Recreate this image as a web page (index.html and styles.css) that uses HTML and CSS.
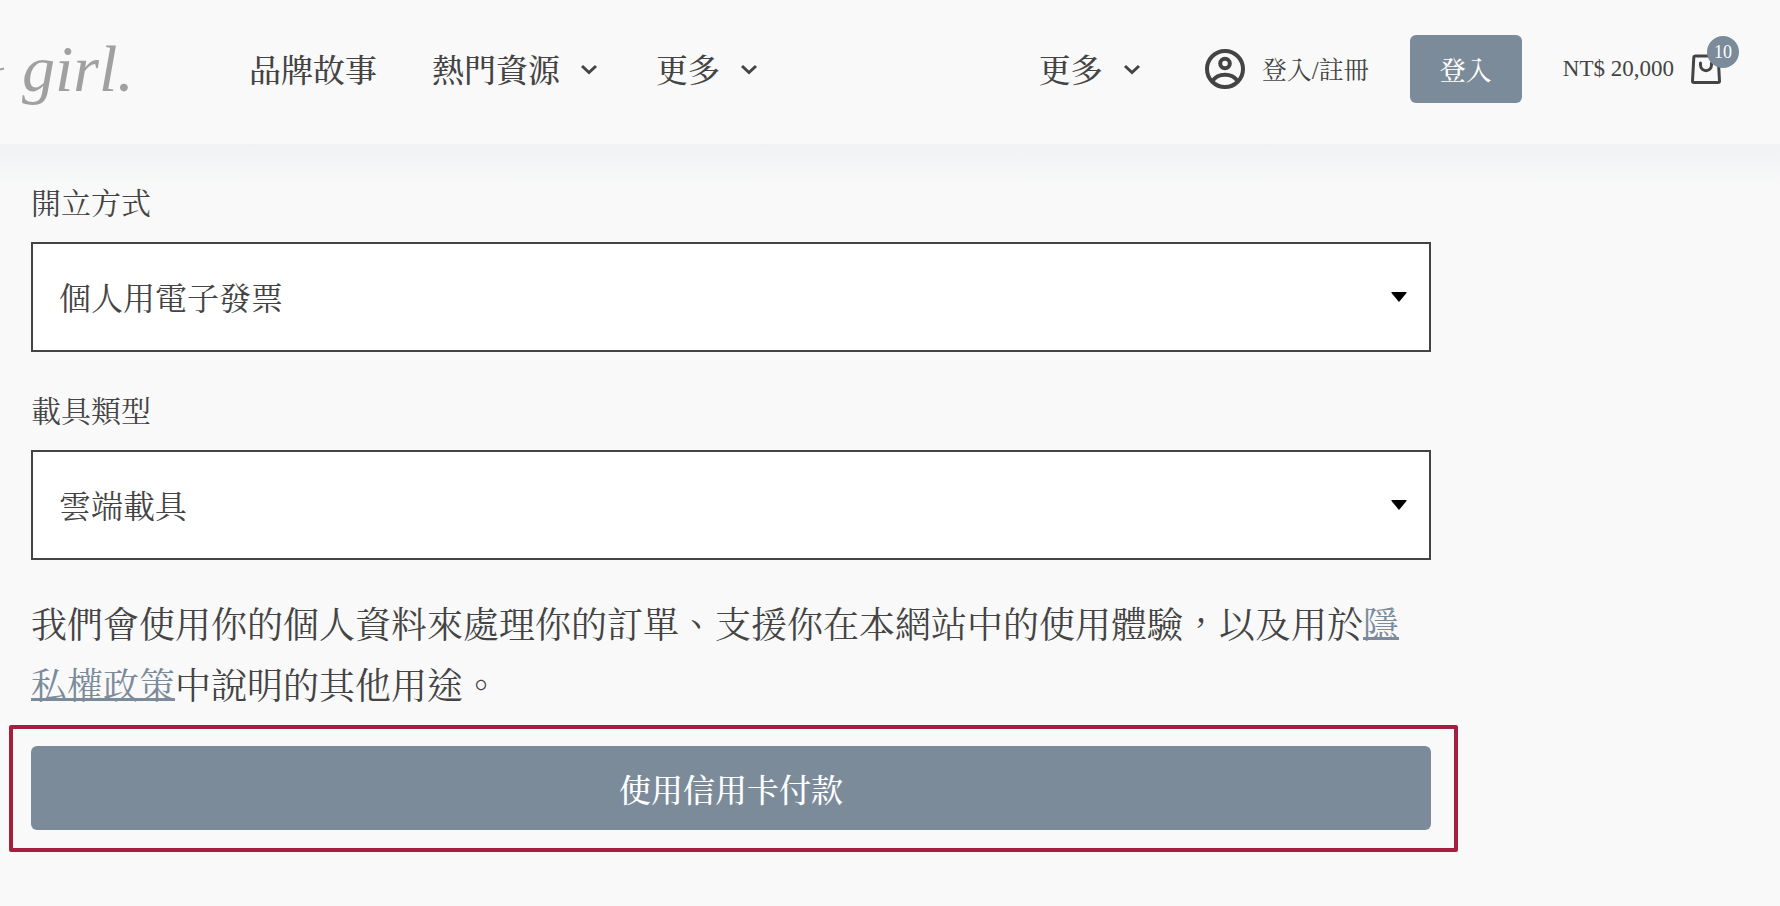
FILE: index.html
```html
<!DOCTYPE html>
<html lang="zh-Hant">
<head>
    <meta charset="utf-8">
    <meta name="viewport" content="width=device-width, initial-scale=1.0">
    <title>結帳</title>
    <link rel="stylesheet" href="styles.css">
</head>

<body>
    <header class="site-header">
        <a class="logo" href="#">
            <svg class="logo-tail" width="6" height="8" viewBox="0 0 6 8"><path d="M0 4.500 L4 3.500" /></svg>
            <span class="logo-text">girl.</span>
        </a>

        <nav class="menu">
            <a class="menu-item" href="#">品牌故事</a>
            <a class="menu-item" href="#">熱門資源
                <svg class="chevron" width="24" height="24" viewBox="0 0 24 24"><path d="M5 9 L12 15.500 L19 9" /></svg>
            </a>
            <a class="menu-item" href="#">更多
                <svg class="chevron" width="24" height="24" viewBox="0 0 24 24"><path d="M5 9 L12 15.500 L19 9" /></svg>
            </a>
        </nav>

        <div class="header-tools">
            <a class="menu-item tools-more" href="#">更多
                <svg class="chevron" width="24" height="24" viewBox="0 0 24 24"><path d="M5 9 L12 15.500 L19 9" /></svg>
            </a>
            <a class="account" href="#">
                <svg class="account-icon" width="40" height="40" viewBox="0 0 40 40">
                    <circle cx="20" cy="20" r="18" />
                    <circle cx="20" cy="14.500" r="4.800" />
                    <path d="M7.500 32 C13 23.500 27 23.500 32.500 32" />
                </svg>
                <span class="account-text">登入/註冊</span>
            </a>
            <button class="login-button" type="button">登入</button>
            <a class="cart" href="#">
                <span class="cart-total">NT$ 20,000</span>
                <span class="cart-bag">
                    <svg class="cart-icon" width="30" height="32" viewBox="0 0 30 32">
                        <path d="M4.500 3 H25.500 Q27 3 27.200 4.500 L28.500 28 Q28.500 29.500 27 29.500 H3 Q1.500 29.500 1.500 28 L2.800 4.500 Q3 3 4.500 3 Z" />
                        <path d="M9.500 10 V12 C9.500 19.500 20.500 19.500 20.500 12 V10" />
                    </svg>
                    <span class="cart-count">10</span>
                </span>
            </a>
        </div>
    </header>

    <main class="checkout">
        <!-- Invoice fields -->
        <div class="field">
            <label for="invoiceType">開立方式</label>
            <div class="select-wrap">
                <select id="invoiceType">
                    <option>個人用電子發票</option>
                </select>
                <svg class="arrow" width="16" height="10" viewBox="0 0 16 10"><path d="M1 0 H15 Q16 0 15.500 1 L8 10 L0.500 1 Q0 0 1 0 Z" /></svg>
            </div>
        </div>
        <div class="field">
            <label for="carrierType">載具類型</label>
            <div class="select-wrap">
                <select id="carrierType">
                    <option>雲端載具</option>
                </select>
                <svg class="arrow" width="16" height="10" viewBox="0 0 16 10"><path d="M1 0 H15 Q16 0 15.500 1 L8 10 L0.500 1 Q0 0 1 0 Z" /></svg>
            </div>
        </div>

        <p class="privacy">我們會使用你的個人資料來處理你的訂單、支援你在本網站中的使用體驗&#65292;以及用於<a href="#">隱私權政策</a>中說明的其他用途。</p>

        <!-- Pay button -->
        <div class="pay-box">
            <button class="pay-button" type="submit">使用信用卡付款</button>
        </div>
    </main>
</body>
</html>
```

FILE: styles.css
```css
* {
    box-sizing: border-box;
}

body {
    --bg-color: #f9f9f9;
    --text-color: #444444;
    --accent-color: #7b8b9a;
    --highlight-color: #a51f3f;

    margin: 0;
    font-family: "Liberation Serif", "Noto Serif CJK TC", "Noto Sans CJK TC", serif;
    background-color: var(--bg-color);
    color: var(--text-color);
}

a {
    color: inherit;
    text-decoration: none;
}

button,
select {
    font-family: inherit;
}

svg {
    display: block;
    flex-shrink: 0;
    fill: none;
    stroke: currentColor;
}

/* Header */
.site-header {
    display: flex;
    align-items: center;
    padding: 35px 59px 41px 0;
    background-color: var(--bg-color);
    white-space: nowrap;
}

.logo {
    display: flex;
    align-items: center;
    width: 249px;
    gap: 16px;
    color: #a0a0a0;
}

.logo-tail {
    stroke-width: 2;
}

.logo-text {
    font-family: "Liberation Serif", serif;
    font-size: 66px;
    font-style: italic;
    line-height: 60px;
}

.menu {
    display: flex;
    gap: 55px;
}

.menu-item {
    display: flex;
    align-items: center;
    gap: 17px;
    padding-top: 4px;
    font-size: 32px;
    font-weight: 500;
    line-height: 48px;
}

.chevron {
    margin-bottom: 4px;
    stroke-width: 3;
}

.header-tools {
    display: flex;
    align-items: center;
    gap: 41px;
    margin-left: auto;
}

.tools-more {
    margin-right: 20px;
}

.account {
    display: flex;
    align-items: center;
    gap: 17px;
    font-size: 25px;
}

.account-icon {
    stroke-width: 4;
}

.account-text {
    padding-bottom: 2px;
}

.login-button {
    height: 68px;
    padding: 0 30px 2px;
    border: none;
    border-radius: 6px;
    background-color: var(--accent-color);
    color: #ffffff;
    font-size: 26px;
    font-weight: 500;
    cursor: pointer;
}

.cart {
    display: flex;
    align-items: center;
    gap: 17px;
}

.cart-total {
    font-size: 23px;
}

.cart-bag {
    position: relative;
}

.cart-icon {
    stroke-width: 3;
    stroke-linecap: round;
}

.cart-count {
    position: absolute;
    top: -17px;
    right: -18px;
    width: 32px;
    height: 32px;
    border-radius: 50%;
    background-color: var(--accent-color);
    color: #ffffff;
    font-size: 18px;
    line-height: 32px;
    text-align: center;
}

/* Checkout form */
.checkout {
    padding: 39px 349px 54px 31px;
    background: linear-gradient(#f0f2f3, var(--bg-color) 45px);
}

.field {
    margin-bottom: 39px;
}

.field label {
    display: block;
    margin-bottom: 18px;
    padding-top: 1px;
    font-size: 30px;
    line-height: 40px;
}

.select-wrap {
    position: relative;
}

.select-wrap select {
    display: block;
    width: 100%;
    height: 110px;
    padding: 4px 60px 0 26px;
    border: 2px solid var(--text-color);
    border-radius: 0;
    background-color: #ffffff;
    color: var(--text-color);
    font-size: 32px;
    appearance: none;
}

.arrow {
    position: absolute;
    top: 50px;
    right: 24px;
    fill: #000000;
    stroke: none;
    pointer-events: none;
}

.privacy {
    margin: -3px 0 7px;
    font-size: 36px;
    line-height: 61px;
}

.privacy a {
    color: var(--accent-color);
    text-decoration: underline;
    text-decoration-thickness: 3px;
    text-underline-offset: -1px;
}

/* Frame around the pay button */
.pay-box {
    margin: 0 -27px 0 -22px;
    padding: 17px 23px 18px 18px;
    border: 4px solid var(--highlight-color);
    border-radius: 2px;
}

.pay-button {
    display: block;
    width: 100%;
    height: 84px;
    border: none;
    border-radius: 6px;
    background-color: var(--accent-color);
    color: #ffffff;
    font-size: 32px;
    font-weight: 500;
    cursor: pointer;
}
```
